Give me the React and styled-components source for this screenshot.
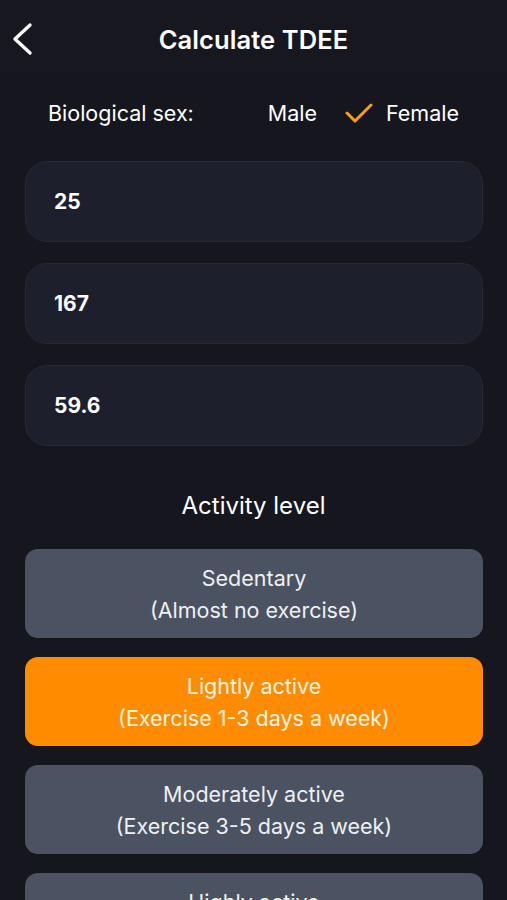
import React from "react";
import styled, { createGlobalStyle } from "styled-components";

const Global = createGlobalStyle`
  html, body { margin: 0; padding: 0; background: #16161f; }
  body { font-family: Inter, "Noto Sans", sans-serif; color: #fff; }
  * { box-sizing: border-box; }
`;

const Page = styled.div`
  width: 507px;
  height: 900px;
  overflow: hidden;
  background: #16161f;
  display: flex;
  flex-direction: column;
  & > * { flex-shrink: 0; }
`;

const Header = styled.header`
  height: 78px;
  display: grid;
  grid-template-columns: 60px 1fr 60px;
  align-items: center;
  background: #17171f;
`;

const BackBtn = styled.div`
  display: flex;
  align-items: center;
  padding-left: 11px;
  height: 100%;
`;

const Title = styled.h1`
  margin: 0;
  text-align: center;
  font-size: 25.5px;
  font-weight: 600;
  letter-spacing: 0.1px;
`;

const SexRow = styled.div`
  display: flex;
  align-items: center;
  height: 70px;
  padding: 0 48px;
  font-size: 21.5px;
  font-weight: 400;
`;

const SexLabel = styled.span`
  flex: 1;
`;

const SexOption = styled.span`
  display: flex;
  align-items: center;
  gap: 13px;
  margin-left: ${(p) => p.$gap || 0}px;
`;

const Form = styled.div`
  display: flex;
  flex-direction: column;
  gap: 21px;
  padding: 13px 24px 0 25px;
`;

const Field = styled.div`
  height: 81px;
  border-radius: 22px;
  background: #1e1f2c;
  border: 1px solid #272835;
  display: flex;
  align-items: center;
  padding-left: 28px;
  font-size: 21px;
  font-weight: 700;
`;

const SectionTitle = styled.h2`
  margin: 40px 0 0;
  height: 40px;
  line-height: 40px;
  text-align: center;
  font-size: 24px;
  font-weight: 400;
`;

const Options = styled.div`
  display: flex;
  flex-direction: column;
  gap: 19px;
  padding: 23px 24px 0 25px;
`;

const Option = styled.div`
  flex-shrink: 0;
  height: 89px;
  border-radius: 13px;
  background: ${(p) => (p.$active ? "#ff8c00" : "#4b5362")};
  display: flex;
  flex-direction: column;
  align-items: center;
  justify-content: center;
  text-align: center;
  font-size: 21.5px;
  line-height: 32px;
  color: ${(p) => (p.$active ? "#fff3e4" : "#eef0f3")};
`;

const levels = [
  ["Sedentary", "(Almost no exercise)"],
  ["Lightly active", "(Exercise 1-3 days a week)", true],
  ["Moderately active", "(Exercise 3-5 days a week)"],
  ["Highly active", "(Exercise 6-7 days a week)"],
];

export default function App() {
  return (
    <Page>
      <Global />
      <Header>
        <BackBtn>
          <svg width="24" height="34" viewBox="0 0 24 34" fill="none">
            <path d="M19 3 L4 17 L19 31" stroke="#fff" strokeWidth="3.4" strokeLinecap="round" strokeLinejoin="round" />
          </svg>
        </BackBtn>
        <Title>Calculate TDEE</Title>
        <div />
      </Header>
      <SexRow>
        <SexLabel>Biological sex:</SexLabel>
        <SexOption>Male</SexOption>
        <SexOption $gap={28}>
          <svg width="28" height="22" viewBox="0 0 28 22" fill="none">
            <path d="M2 11 L10 19 L26 3" stroke="#ff9d0a" strokeWidth="3" strokeLinecap="round" strokeLinejoin="round" />
          </svg>
          Female
        </SexOption>
      </SexRow>
      <Form>
        <Field>25</Field>
        <Field>167</Field>
        <Field>59.6</Field>
      </Form>
      <SectionTitle>Activity level</SectionTitle>
      <Options>
        {levels.map(([a, b, active]) => (
          <Option key={a} $active={active}>
            <span>{a}</span>
            <span>{b}</span>
          </Option>
        ))}
      </Options>
    </Page>
  );
}
